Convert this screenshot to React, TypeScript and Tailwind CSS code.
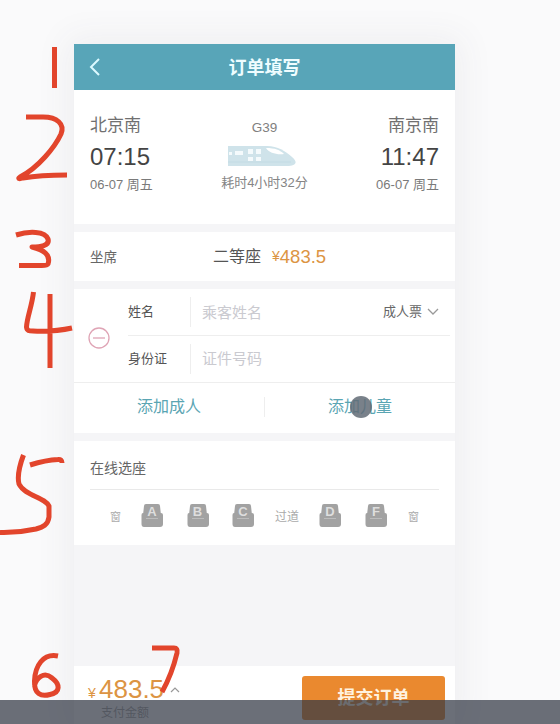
import React from "react";

const Seat = ({ label }: { label: string }) => (
  <div className="relative h-6 w-[23px]">
    <svg viewBox="0 0 23 24" className="block h-6 w-[23px]" fill="#a2a2a2">
      <path d="M5 0h12q2 0 2 2l1 9h-18l1-9q0-2 2-2z" />
      <path d="M2 9h18q2 0 2 2v9q0 3-3 3H3q-2.500 0-2.500-3v-9q0-2 1.500-2z" />
      <path d="M5 14.500h12" stroke="#bcbcbc" strokeWidth="1" />
    </svg>
    <span className="absolute inset-x-0 -left-px top-[1px] text-center text-[13px] font-bold leading-[14px] text-[#dedede]">{label}</span>
  </div>
);

const Station = ({ name, time, right }: { name: string; time: string; right?: boolean }) => (
  <div className={right ? "flex w-[90px] flex-col items-end" : "flex w-[90px] flex-col items-start"}>
    <div className="h-[22px] text-[17px] leading-[22px] text-[#707070]">{name}</div>
    <div className="mt-[6px] h-7 text-[24px] leading-7 text-[#444]">{time}</div>
    <div className="mt-[5px] h-[18px] whitespace-nowrap text-[13px] leading-[18px] text-[#7a7a7a]">06-07 周五</div>
  </div>
);

const Train = () => (
  <svg viewBox="0 0 68 22" className="mt-[9px] block h-[22px] w-[68px]">
    <path d="M0 1h39c11 0 18 5 25 11 7 6 3 9-5 9H0z" fill="#cfe3ea" />
    <path d="M38 3c9 0 14 2 18 6-7 1-15-1-18-6z" fill="#fff" />
    <path d="M1 7h3v3H1zM7 6h8v4H7zM20 4h5v5h-5zM28 4h5v5h-5zM20 12h5v4h-5zM28 12h5v4h-5z" fill="#f4fafc" />
    <path d="M0 17h63" stroke="#c3dbe4" />
  </svg>
);

const Annotations = () => (
  <svg className="pointer-events-none absolute inset-0 h-[700px] w-[560px]" viewBox="0 0 560 700" fill="none" stroke="#e2452c" strokeWidth="5" strokeLinejoin="round">
    <path d="M54.500 47V88" />
    <path d="M26 117H43C57 117 65 124 61 134C55 147 38 168 20 177C17 179 20 179 23 178Q40 175 67 175" />
    <path d="M16 235C29 231 45 231 48 239C50 246 40 247 32 247C44 250 51 255 48 264C47 266 43 265.500 39 265.500H19" />
    <path d="M33.500 292C32 306 27 317 26.500 327C27 331 29 331 33 331Q54 332 72 328M50 294V368" />
    <path d="M23.500 455C19 467 17 476 19 484C25 496 45 497 49 506V517C48 525 43 527 36 529Q18 533 0 532.500M30 465Q46 460 58 459.500Q62 459 62 463" />
    <path d="M58 656C43 653 35 666 34.500 681C34 694 41 697 50 694.500C61 692 60 684 52 678C44 671 36 678 34.500 686" />
    <path d="M152 648H174Q178 648 177 653Q172 674 162 692" />
  </svg>
);

export default function App() {
  return (
    <main className="relative h-[724px] w-[560px] overflow-hidden bg-[#fafafb] pl-[74px] pt-11 font-['Liberation_Sans','Noto_Sans_CJK_SC',sans-serif]">
      <div className="flex h-[680px] w-[381px] flex-col bg-[#f5f5f7] shadow-[0_0_32px_8px_rgba(70,60,90,0.06)]">
        <header className="grid h-[46px] shrink-0 grid-cols-[60px_1fr_60px] items-center bg-[#58a5b8]">
          <svg viewBox="0 0 12 18" className="ml-[15px] h-[18px] w-3" fill="none" stroke="#dcfaff" strokeWidth="2"><path d="M10 1L2 9l8 8" /></svg>
          <h1 className="pt-[2px] text-center text-[18px] font-bold leading-6 text-[#effdff]">订单填写</h1>
        </header>

        <section className="flex h-[134px] shrink-0 justify-between bg-white px-4 pt-[25px]">
          <Station name="北京南" time="07:15" />
          <div className="flex flex-col items-center pt-[5px]">
            <div className="h-4 text-[13.5px] leading-4 text-[#808080]">G39</div>
            <div className="-ml-1"><Train /></div>
            <div className="mt-[7px] whitespace-nowrap text-[13px] leading-[18px] text-[#858585]">耗时4小时32分</div>
          </div>
          <Station name="南京南" time="11:47" right />
        </section>

        <section className="mt-2 flex h-[49px] shrink-0 items-center bg-white pl-4">
          <span className="w-[123px] pt-[3px] text-[13.5px] text-[#666]">坐席</span>
          <span className="text-[16px] text-[#555]">二等座</span>
          <span className="ml-[11px] text-[14px] text-[#dc9443]">¥</span>
          <span className="text-[18.5px] text-[#dc9443]">483.5</span>
        </section>

        <section className="mt-2 h-[144px] shrink-0 bg-white">
          <div className="flex h-[94px] border-b border-[#eee]">
            <div className="flex w-[54px] items-center pl-[14px] pt-1">
              <svg viewBox="0 0 22 22" className="h-[22px] w-[22px]" fill="none" stroke="#dfa4b5" strokeWidth="1.300"><circle cx="11" cy="11" r="10" /><path d="M5 11h12" /></svg>
            </div>
            <div className="flex-1">
              <div className="mr-[5px] flex h-[47px] items-center border-b border-[#eee] pr-[11px]">
                <span className="w-[62px] text-[13px] text-[#555]">姓名</span>
                <span className="h-[30px] w-px bg-[#eee]" />
                <span className="ml-[11px] flex-1 pt-[2px] text-[15px] text-[#cacad0]">乘客姓名</span>
                <span className="text-[13px] text-[#666]">成人票</span>
                <svg viewBox="0 0 12 8" className="ml-[5px] h-2 w-3" fill="none" stroke="#999" strokeWidth="1.300"><path d="M1 1l5 5 5-5" /></svg>
              </div>
              <div className="flex h-[46px] items-center">
                <span className="w-[62px] text-[13px] text-[#555]">身份证</span>
                <span className="h-[30px] w-px bg-[#eee]" />
                <span className="ml-[11px] text-[15px] text-[#cacad0]">证件号码</span>
              </div>
            </div>
          </div>
          <div className="flex h-[47px] items-center text-center text-[16px] text-[#5aa5b3]">
            <span className="flex-1">添加成人</span>
            <span className="h-5 w-px bg-[#eee]" />
            <span className="relative flex-1 text-center">
              添加儿童
              <i className="absolute left-[84.5px] top-[1px] h-[22px] w-[22px] rounded-full bg-[#626b76]/85" />
            </span>
          </div>
        </section>

        <section className="mt-2 h-[104px] shrink-0 bg-white px-4">
          <h2 className="flex h-[49px] items-center border-b border-[#e9e9e9] pt-[7px] text-[14px] text-[#666]">在线选座</h2>
          <div className="flex h-[52px] items-center pl-5 text-[11px] text-[#aaa]">
            <span className="mr-5 pt-[2px]">窗</span>
            <div className="flex gap-[22.500px]"><Seat label="A" /><Seat label="B" /><Seat label="C" /></div>
            <span className="ml-[20px] mr-5 pt-[2px] text-[12px]">过道</span>
            <div className="flex gap-[23px]"><Seat label="D" /><Seat label="F" /></div>
            <span className="ml-5 pt-[2px]">窗</span>
          </div>
        </section>

        <footer className="mt-auto flex h-[58px] shrink-0 justify-between bg-white pl-[14px] pr-[10px]">
          <div>
            <div className="flex h-9 items-baseline pt-[8px] text-[#dc9443]">
              <span className="w-[11px] text-[14px]">¥</span>
              <span className="text-[26px] leading-[30px]">483.5</span>
              <svg viewBox="0 0 10 11" className="ml-[6px] h-[11px] w-[10px]" fill="none" stroke="#999" strokeWidth="1.200"><path d="M1 5l4-4 4 4" /></svg>
            </div>
            <div className="ml-[13px] mt-[2px] text-[12px] leading-[18px] text-[#aaa]">支付金额</div>
          </div>
          <button className="mt-[10px] h-11 w-[143px] rounded-[3px] bg-[#ea892f] text-[18px] font-bold text-[#fff2df]">提交订单</button>
        </footer>
      </div>
      <Annotations />
      <div className="absolute inset-x-0 bottom-0 h-6 bg-[rgba(50,55,68,0.72)]" />
    </main>
  );
}
